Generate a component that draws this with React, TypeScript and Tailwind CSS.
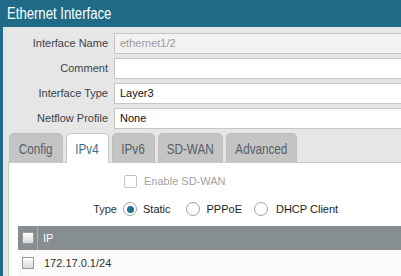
import React from 'react';

const Radio = ({ checked, className = '' }: { checked?: boolean; className?: string }) => (
  <span
    className={`w-[14px] h-[14px] rounded-full border border-[#9aa3a8] bg-white flex items-center justify-center shrink-0 ${className}`}
  >
    {checked && <span className="w-[7px] h-[7px] rounded-full bg-[#1f6f8f]" />}
  </span>
);

const Box = () => (
  <span className="w-[12px] h-[12px] border border-[#9a9a9a] bg-gradient-to-b from-white to-[#d8d8d8] shrink-0" />
);

const tabs = [
  { name: 'Config', w: 'w-[54px]' },
  { name: 'IPv4', w: 'w-[43px]' },
  { name: 'IPv6', w: 'w-[43px]' },
  { name: 'SD-WAN', w: 'w-[65px]' },
  { name: 'Advanced', w: 'w-[71px]' },
];

const App = () => {
  const fields = [
    { label: 'Interface Name', value: 'ethernet1/2', disabled: true },
    { label: 'Comment', value: '' },
    { label: 'Interface Type', value: 'Layer3' },
    { label: 'Netflow Profile', value: 'None' },
  ];

  return (
    <div className="w-[401px] h-[276px] overflow-hidden bg-[#206c88] font-['Liberation_Sans'] leading-none">
      <div className="w-[480px]">
        <div className="h-[27px] flex items-center pl-[7px] text-white text-[16px]">
          <span className="scale-x-[0.82] origin-left whitespace-nowrap">Ethernet Interface</span>
        </div>
        <div className="ml-[3px] h-[249px] bg-[#e6e6e6] pt-[6px]">
          <div className="flex flex-col gap-[4px]">
            {fields.map((f) => (
              <div key={f.label} className="flex items-center gap-[6px]">
                <span className="w-[105px] text-right text-[11px] text-[#3d4247]">{f.label}</span>
                <div
                  className={`flex-1 h-[21px] border border-[#c6c6c6] flex items-center px-[5px] text-[11px] ${
                    f.disabled ? 'bg-[#f2f2f2] text-[#9a9a9a]' : 'bg-white text-[#111]'
                  }`}
                >
                  {f.value}
                </div>
              </div>
            ))}
          </div>

          <div className="ml-[5px] mt-[4px]">
            <div className="flex items-end gap-[3px] pl-[1px] text-[15px]">
              {tabs.map((t) => (
                <div
                  key={t.name}
                  className={`${t.w} flex items-center justify-center rounded-t-[5px] border border-b-0 ${
                    t.name === 'IPv4'
                      ? 'h-[30px] -mb-[1px] border-[#c8c8c8] bg-white text-[#3e6f8d] relative z-10'
                      : 'h-[29px] border-[#bdbdbd] bg-[#c4c4c4] text-[#56606a]'
                  }`}
                >
                  <span className="scale-x-[0.78] whitespace-nowrap">{t.name}</span>
                </div>
              ))}
            </div>
            <div className="h-[114px] bg-white border-t border-l border-[#c8c8c8] text-[11px]">
              <div className="flex items-center gap-[7px] mt-[12px] h-[13px]">
                <span className="w-[108px]" />
                <span className="w-[13px] h-[13px] border border-[#c2c2c2] rounded-[2px] bg-white" />
                <span className="text-[#a3a3a3]">Enable SD-WAN</span>
              </div>
              <div className="flex items-center mt-[14px] h-[14px] text-[#222]">
                <span className="w-[108px] text-right text-[#333]">Type</span>
                <Radio checked className="ml-[6px]" />
                <span className="ml-[6px]">Static</span>
                <Radio className="ml-[15px]" />
                <span className="ml-[7px]">PPPoE</span>
                <Radio className="ml-[12px]" />
                <span className="ml-[8px]">DHCP Client</span>
              </div>
              <div className="ml-[9px] mt-[10px]">
                <div className="h-[24px] bg-[#868e92] flex items-center text-white">
                  <div className="w-[20px] h-full flex items-center justify-center border-r border-[#a9b0b3]">
                    <Box />
                  </div>
                  <span className="pl-[5px]">IP</span>
                </div>
                <div className="h-[26px] bg-[#fafafa] flex items-center text-[#333]">
                  <div className="w-[20px] flex items-center justify-center">
                    <Box />
                  </div>
                  <span className="pl-[6px]">172.17.0.1/24</span>
                </div>
              </div>
            </div>
          </div>
        </div>
      </div>
    </div>
  );
};

export default App;
